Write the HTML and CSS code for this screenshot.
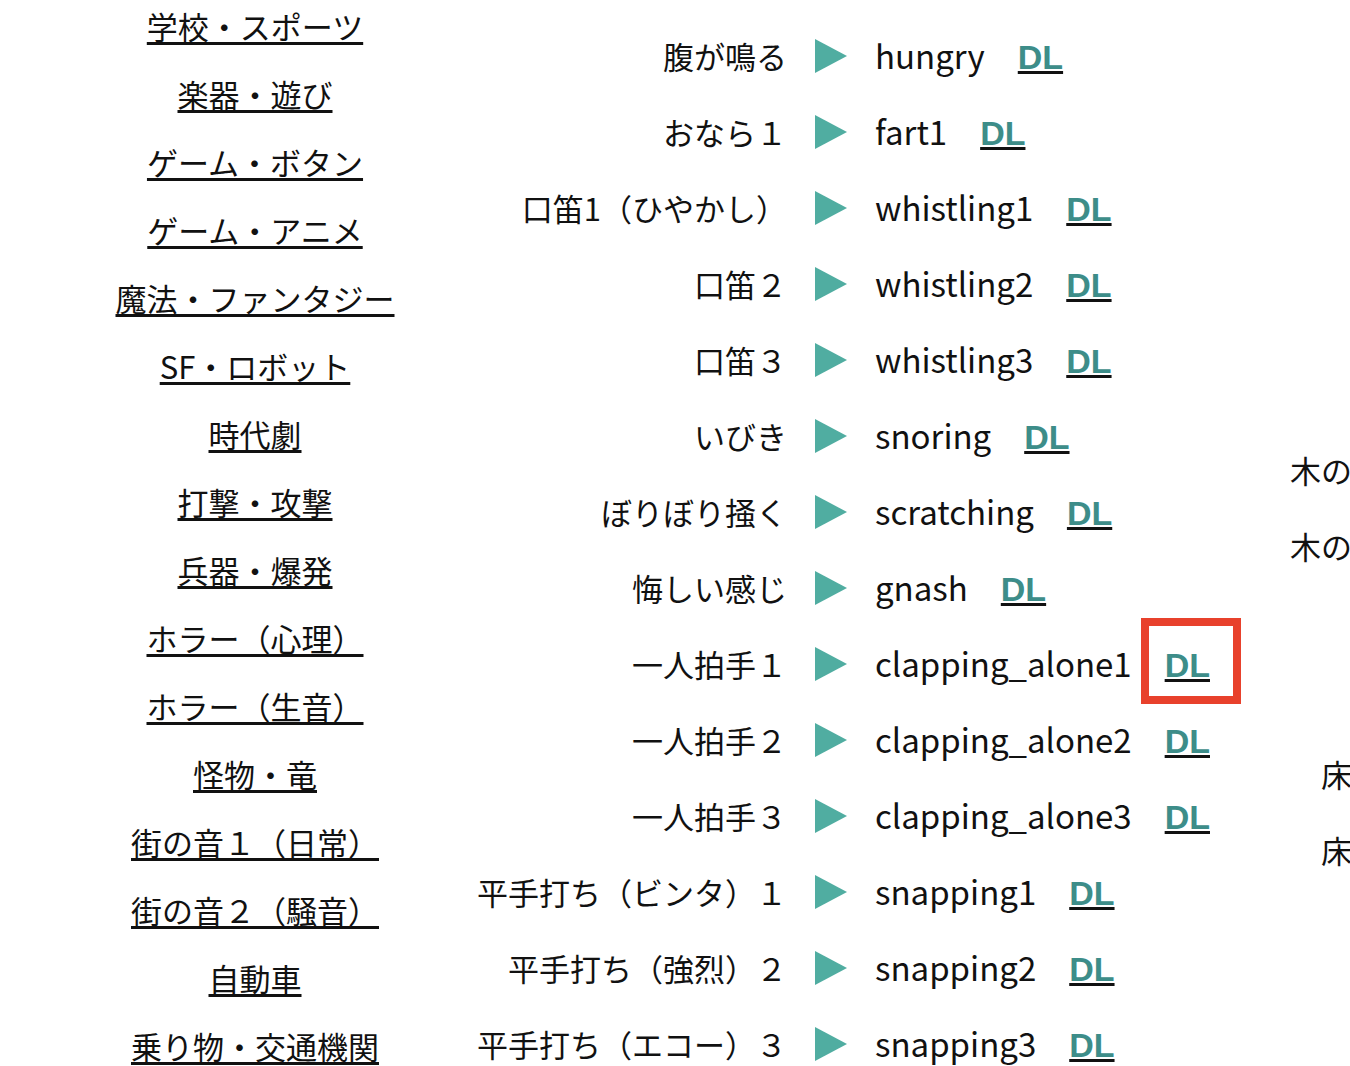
FILE: index.html
```html
<!DOCTYPE html>
<html lang="ja">
<head>
  <meta charset="UTF-8" />
  <meta name="viewport" content="width=device-width, initial-scale=1" />
  <title>効果音素材</title>
  <link rel="stylesheet" href="styles.css">
</head>
<body>
  <div class="page">
    <nav class="cats">
      <a href="#">学校・スポーツ</a>
      <a href="#">楽器・遊び</a>
      <a href="#">ゲーム・ボタン</a>
      <a href="#">ゲーム・アニメ</a>
      <a href="#">魔法・ファンタジー</a>
      <a href="#">SF・ロボット</a>
      <a href="#">時代劇</a>
      <a href="#">打撃・攻撃</a>
      <a href="#">兵器・爆発</a>
      <a href="#">ホラー（心理）</a>
      <a href="#">ホラー（生音）</a>
      <a href="#">怪物・竜</a>
      <a href="#">街の音１（日常）</a>
      <a href="#">街の音２（騒音）</a>
      <a href="#">自動車</a>
      <a href="#">乗り物・交通機関</a>
    </nav>

    <div class="sounds">
      <div class="label">腹が鳴る</div>
      <div class="play"><svg viewBox="0 0 32 34"><polygon points="0,0 32,17 0,34"/></svg></div>
      <div class="name">hungry<a class="dl" href="#">DL</a></div>

      <div class="label">おなら１</div>
      <div class="play"><svg viewBox="0 0 32 34"><polygon points="0,0 32,17 0,34"/></svg></div>
      <div class="name">fart1<a class="dl" href="#">DL</a></div>

      <div class="label">口笛1（ひやかし）</div>
      <div class="play"><svg viewBox="0 0 32 34"><polygon points="0,0 32,17 0,34"/></svg></div>
      <div class="name">whistling1<a class="dl" href="#">DL</a></div>

      <div class="label">口笛２</div>
      <div class="play"><svg viewBox="0 0 32 34"><polygon points="0,0 32,17 0,34"/></svg></div>
      <div class="name">whistling2<a class="dl" href="#">DL</a></div>

      <div class="label">口笛３</div>
      <div class="play"><svg viewBox="0 0 32 34"><polygon points="0,0 32,17 0,34"/></svg></div>
      <div class="name">whistling3<a class="dl" href="#">DL</a></div>

      <div class="label">いびき</div>
      <div class="play"><svg viewBox="0 0 32 34"><polygon points="0,0 32,17 0,34"/></svg></div>
      <div class="name">snoring<a class="dl" href="#">DL</a></div>

      <div class="label">ぼりぼり掻く</div>
      <div class="play"><svg viewBox="0 0 32 34"><polygon points="0,0 32,17 0,34"/></svg></div>
      <div class="name">scratching<a class="dl" href="#">DL</a></div>

      <div class="label">悔しい感じ</div>
      <div class="play"><svg viewBox="0 0 32 34"><polygon points="0,0 32,17 0,34"/></svg></div>
      <div class="name">gnash<a class="dl" href="#">DL</a></div>

      <div class="label">一人拍手１</div>
      <div class="play"><svg viewBox="0 0 32 34"><polygon points="0,0 32,17 0,34"/></svg></div>
      <div class="name">clapping_alone1<a class="dl marked" href="#">DL</a></div>

      <div class="label">一人拍手２</div>
      <div class="play"><svg viewBox="0 0 32 34"><polygon points="0,0 32,17 0,34"/></svg></div>
      <div class="name">clapping_alone2<a class="dl" href="#">DL</a></div>

      <div class="label">一人拍手３</div>
      <div class="play"><svg viewBox="0 0 32 34"><polygon points="0,0 32,17 0,34"/></svg></div>
      <div class="name">clapping_alone3<a class="dl" href="#">DL</a></div>

      <div class="label">平手打ち（ビンタ）１</div>
      <div class="play"><svg viewBox="0 0 32 34"><polygon points="0,0 32,17 0,34"/></svg></div>
      <div class="name">snapping1<a class="dl" href="#">DL</a></div>

      <div class="label">平手打ち（強烈）２</div>
      <div class="play"><svg viewBox="0 0 32 34"><polygon points="0,0 32,17 0,34"/></svg></div>
      <div class="name">snapping2<a class="dl" href="#">DL</a></div>

      <div class="label">平手打ち（エコー）３</div>
      <div class="play"><svg viewBox="0 0 32 34"><polygon points="0,0 32,17 0,34"/></svg></div>
      <div class="name">snapping3<a class="dl" href="#">DL</a></div>
    </div>

    <div class="more">
      <div class="label">足音１</div>
      <div class="label">足音２</div>
      <div class="label">足音３</div>
      <div class="label">階段１</div>
      <div class="label">階段２</div>
      <div class="label">木の扉を叩く</div>
      <div class="label">木の扉を開く</div>
      <div class="label">扉１</div>
      <div class="label">扉２</div>
      <div class="label">床がきしむ</div>
      <div class="label">床を踏む１</div>
      <div class="label">鍵１</div>
      <div class="label">鍵２</div>
    </div>
  </div>
</body>
</html>
```

FILE: styles.css
```css
html, body {
  overflow: hidden;
}
body {
  margin: 0;
  background: #fff;
  color: #111;
  font-family: "Noto Sans CJK JP", "Liberation Sans", sans-serif;
  font-size: 31px;
}
.page {
  display: flex;
  align-items: flex-start;
}
.cats {
  flex: none;
  width: 400px;
  margin-left: 55px;
  padding-top: 8px;
  display: flex;
  flex-direction: column;
  align-items: center;
  gap: 32px;
}
.cats a {
  color: #111;
  line-height: 36px;
  white-space: nowrap;
  text-decoration-thickness: 3px;
  text-underline-offset: 3px;
}
.sounds {
  flex: none;
  width: 795px;
  margin-top: 18px;
  display: grid;
  grid-template-columns: 332px 32px 1fr;
  grid-auto-rows: 76px;
  column-gap: 28px;
  align-items: center;
  white-space: nowrap;
}
.sounds .label {
  text-align: right;
  line-height: 36px;
}
.play svg {
  display: block;
  width: 32px;
  height: 34px;
  fill: #50ada1;
}
.name {
  font-size: 33px;
  line-height: 36px;
}
.dl {
  position: relative;
  display: inline-block;
  margin-left: 33px;
  color: #3d8d89;
  font-family: "Liberation Sans", sans-serif;
  font-size: 34px;
  font-weight: bold;
  text-decoration-color: #111;
  text-decoration-thickness: 3px;
}
.dl.marked::after {
  content: "";
  position: absolute;
  left: -24px;
  right: -31px;
  top: -29px;
  bottom: -21px;
  border: 8px solid #e8412c;
}
.more {
  flex: none;
  width: 226px;
  padding-top: 52px;
  white-space: nowrap;
}
.more .label {
  height: 76px;
  line-height: 76px;
  text-align: right;
}
```
